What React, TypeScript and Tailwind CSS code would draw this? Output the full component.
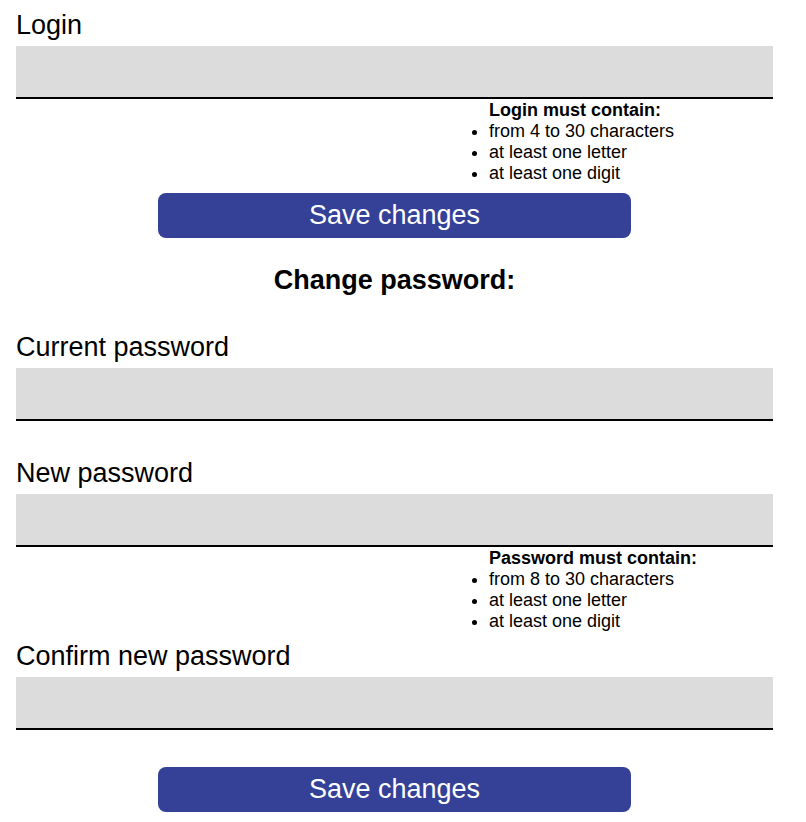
import React from "react";

const font = { fontFamily: '"Liberation Sans", Arial, sans-serif' };

function Field({ label, mb, type = "text" }: { label: string; mb: string; type?: string }) {
  return (
    <div>
      <label className={`block text-[27px] leading-[31px] text-black ${mb}`}>{label}</label>
      <input
        type={type}
        className="block w-full h-[53px] bg-[#dcdcdc] border-0 border-b-2 border-black outline-none"
      />
    </div>
  );
}

function Hint({ title, items }: { title: string; items: string[] }) {
  return (
    <ul className="ml-[433px] pl-10 pt-px list-disc text-[18px] leading-[21px] text-black">
      <li className="list-none font-bold">{title}</li>
      {items.map((t) => (
        <li key={t}>{t}</li>
      ))}
    </ul>
  );
}

function SaveButton({ mt }: { mt: string }) {
  return (
    <button
      className={`block mx-auto w-[473px] h-[45px] rounded-lg bg-[#344196] text-white text-[27px] leading-[31px] ${mt}`}
    >
      Save changes
    </button>
  );
}

export default function App() {
  return (
    <div className="w-[806px] min-h-[822px] bg-white" style={font}>
      <div className="ml-4 w-[757px] pt-[10px]">
        <Field label="Login" mb="mb-[5px]" />
        <Hint
          title="Login must contain:"
          items={["from 4 to 30 characters", "at least one letter", "at least one digit"]}
        />
        <SaveButton mt="mt-[9px]" />
        <h2 className="mt-[27px] text-center font-bold text-[27px] leading-[31px] text-black">
          Change password:
        </h2>
        <div className="mt-[36px]">
          <Field label="Current password" mb="mb-[5px]" type="password" />
        </div>
        <div className="mt-[37px]">
          <Field label="New password" mb="mb-[5px]" type="password" />
        </div>
        <Hint
          title="Password must contain:"
          items={["from 8 to 30 characters", "at least one letter", "at least one digit"]}
        />
        <div className="mt-[9px]">
          <Field label="Confirm new password" mb="mb-[5px]" type="password" />
        </div>
        <SaveButton mt="mt-[37px]" />
      </div>
    </div>
  );
}
